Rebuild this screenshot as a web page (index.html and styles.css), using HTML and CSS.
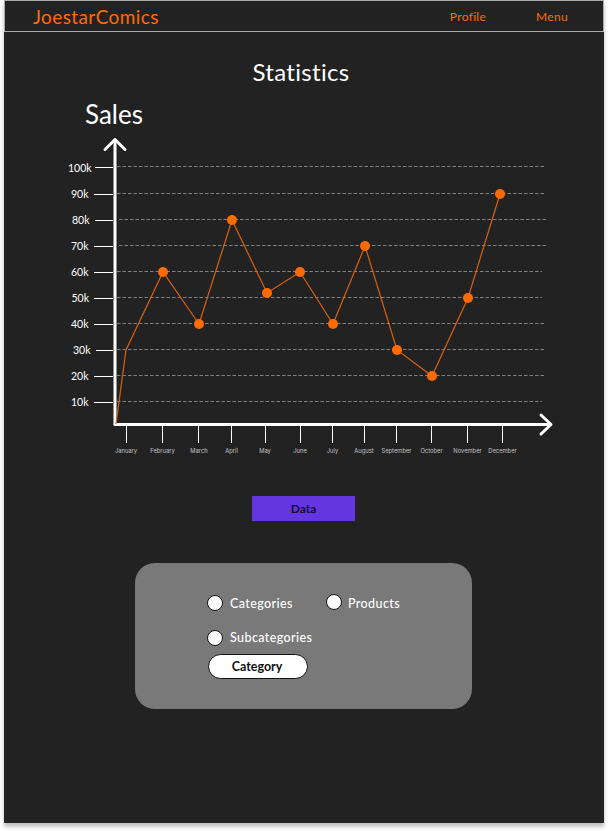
FILE: index.html
```html
<!DOCTYPE html>
<html lang="en">
<head>
    <meta charset="UTF-8">
    <meta name="viewport" content="width=device-width, initial-scale=1.0">
    <link rel="stylesheet" href="styles.css">
    <title>JoestarComics Statistics</title>
</head>
<body>
    <div class="page">
        <header class="topbar">
            <span class="brand">JoestarComics</span>
            <nav class="links">
                <a class="link-profile">Profile</a>
                <a class="link-menu">Menu</a>
            </nav>
        </header>

        <h1 class="title">Statistics</h1>

        <svg class="chart" width="600" height="400" viewBox="4 90 600 400">
            <text class="sales" x="85" y="124">Sales</text>

            <g class="grid">
                <line x1="117" y1="166.5" x2="544" y2="166.5"/>
                <line x1="117" y1="193.5" x2="544" y2="193.5"/>
                <line x1="119" y1="219.5" x2="546" y2="219.5"/>
                <line x1="119" y1="245.5" x2="546" y2="245.5"/>
                <line x1="117" y1="271.5" x2="542" y2="271.5"/>
                <line x1="117" y1="297.5" x2="542" y2="297.5"/>
                <line x1="117" y1="323.5" x2="544" y2="323.5"/>
                <line x1="117" y1="349.5" x2="544" y2="349.5"/>
                <line x1="117" y1="375.5" x2="544" y2="375.5"/>
                <line x1="117" y1="401.5" x2="542" y2="401.5"/>
            </g>

            <g class="ticks">
                <line x1="95" y1="167.5" x2="113" y2="167.5"/>
                <line x1="94" y1="194.5" x2="113" y2="194.5"/>
                <line x1="95" y1="220.5" x2="113" y2="220.5"/>
                <line x1="94" y1="246.5" x2="113" y2="246.5"/>
                <line x1="94" y1="272.5" x2="113" y2="272.5"/>
                <line x1="94" y1="298.5" x2="113" y2="298.5"/>
                <line x1="94" y1="324.5" x2="113" y2="324.5"/>
                <line x1="96" y1="350.5" x2="113" y2="350.5"/>
                <line x1="94" y1="376.5" x2="113" y2="376.5"/>
                <line x1="94" y1="402.5" x2="113" y2="402.5"/>
                <line x1="126.5" y1="425" x2="126.5" y2="443"/>
                <line x1="162.5" y1="425" x2="162.5" y2="443"/>
                <line x1="198.5" y1="425" x2="198.5" y2="443"/>
                <line x1="231.5" y1="425" x2="231.5" y2="443"/>
                <line x1="265.5" y1="425" x2="265.5" y2="443"/>
                <line x1="300.5" y1="425" x2="300.5" y2="443"/>
                <line x1="332.5" y1="425" x2="332.5" y2="443"/>
                <line x1="364.5" y1="425" x2="364.5" y2="443"/>
                <line x1="396.5" y1="425" x2="396.5" y2="443"/>
                <line x1="431.5" y1="425" x2="431.5" y2="443"/>
                <line x1="467.5" y1="425" x2="467.5" y2="443"/>
                <line x1="502.5" y1="425" x2="502.5" y2="443"/>
            </g>

            <g class="axis">
                <path d="M115 424V140"/>
                <path d="M105 149.5L115 139.5L125 149.5"/>
                <path d="M115 424.5H550"/>
                <path d="M541 415L551 424.5L541 434"/>
            </g>

            <g class="ylabels">
                <text x="68" y="172">100k</text>
                <text x="71" y="198">90k</text>
                <text x="72" y="224">80k</text>
                <text x="71" y="250">70k</text>
                <text x="71" y="276">60k</text>
                <text x="71.5" y="302">50k</text>
                <text x="71" y="328">40k</text>
                <text x="73" y="354">30k</text>
                <text x="71" y="380">20k</text>
                <text x="71" y="406">10k</text>
            </g>

            <g class="xlabels">
                <text x="126" y="453">January</text>
                <text x="162.5" y="453">February</text>
                <text x="199" y="453">March</text>
                <text x="231.5" y="453">April</text>
                <text x="265" y="453">May</text>
                <text x="300" y="453">June</text>
                <text x="332.5" y="453">July</text>
                <text x="364" y="453">August</text>
                <text x="396.5" y="453">September</text>
                <text x="431.5" y="453">October</text>
                <text x="467.5" y="453">November</text>
                <text x="502.5" y="453">December</text>
            </g>

            <polyline class="sales-line" points="116,424 126,350 163,272 199,324 232,220 267,293 300,272 333,324 365,246 397,350 432,376 468,298 500,194"/>
            <g class="dots">
                <circle cx="163" cy="272" r="5"/>
                <circle cx="199" cy="324" r="5"/>
                <circle cx="232" cy="220" r="5"/>
                <circle cx="267" cy="293" r="5"/>
                <circle cx="300" cy="272" r="5"/>
                <circle cx="333" cy="324" r="5"/>
                <circle cx="365" cy="246" r="5"/>
                <circle cx="397" cy="350" r="5"/>
                <circle cx="432" cy="376" r="5"/>
                <circle cx="468" cy="298" r="5"/>
                <circle cx="500" cy="194" r="5"/>
            </g>
        </svg>

        <div class="data-row">
            <button type="button" class="data-btn">Data</button>
        </div>

        <section class="panel">
            <div class="options">
                <div class="option-row">
                    <label class="option option-wide"><span class="radio"></span>Categories</label>
                    <label class="option option-up"><span class="radio"></span>Products</label>
                </div>
                <label class="option"><span class="radio"></span><span class="option-sub">Subcategories</span></label>
                <button type="button" class="category-btn">Category</button>
            </div>
        </section>
    </div>
</body>
</html>
```

FILE: styles.css
```css
* {
    box-sizing: border-box;
}

html, body {
    margin: 0;
    height: 100%;
    overflow: hidden;
}

body {
    background-color: #fff;
    font-family: "Lato", "Noto Sans", sans-serif;
    padding: 0 4px;
}

.page {
    width: 600px;
    height: 823px;
    background-color: #222;
    box-shadow: 0 4px 4px rgba(0, 0, 0, 0.25);
}

.topbar {
    height: 32px;
    border: 1px solid #aaa;
    display: flex;
    align-items: center;
    justify-content: space-between;
    padding-left: 28px;
}

.brand {
    color: #ff6b00;
    font-size: 19px;
    letter-spacing: 0.4px;
}

.links {
    display: flex;
    font-size: 12px;
    letter-spacing: 0.3px;
    color: #ff6b00;
}

.link-profile {
    margin-right: 50px;
}

.link-menu {
    margin-right: 35px;
}

.title {
    margin: 0;
    height: 58px;
    padding: 26px 6px 0 0;
    color: #fff;
    font-size: 24px;
    line-height: 28px;
    letter-spacing: 0.3px;
    font-weight: 400;
    text-align: center;
}

.chart {
    display: block;
}

.sales {
    fill: #fff;
    font-size: 26px;
}

.grid line {
    stroke: #808080;
    stroke-width: 1;
    stroke-dasharray: 3.5 2;
}

.ticks line {
    stroke: #fff;
    stroke-width: 1;
}

.axis path {
    fill: none;
    stroke: #fff;
    stroke-width: 3;
    stroke-linecap: round;
    stroke-linejoin: round;
}

.ylabels text {
    fill: #fff;
    font-size: 10.5px;
}

.xlabels text {
    fill: #c4c4c4;
    font-family: "Inter", sans-serif;
    font-size: 5.8px;
    text-anchor: middle;
}

.sales-line {
    fill: none;
    stroke: #d9620f;
    stroke-width: 1.2;
}

.dots circle {
    fill: #ff6b00;
}

.data-row {
    display: flex;
    justify-content: center;
    padding: 6px 1px 0 0;
}

.data-btn {
    width: 103px;
    height: 25px;
    border: 0;
    padding: 0;
    background-color: #6436e0;
    color: #14063a;
    font-family: inherit;
    font-size: 12px;
    font-weight: 700;
}

.panel {
    width: 337px;
    height: 146px;
    margin: 42px 0 0 131px;
    padding: 32px 0 0 72px;
    background-color: #797979;
    border-radius: 20px;
}

.options {
    display: flex;
    flex-direction: column;
    align-items: flex-start;
}

.option-row {
    display: flex;
    height: 35px;
}

.option {
    display: flex;
    align-items: center;
    height: 16px;
    color: #fff;
    font-size: 12.5px;
    font-weight: 500;
    letter-spacing: 0.4px;
}

.option-wide {
    width: 119px;
}

.option-sub {
    margin-top: -2px;
}

.radio {
    width: 16px;
    height: 16px;
    margin-right: 7px;
    background-color: #fff;
    border: 1px solid #111;
    border-radius: 50%;
}

.option-up .radio {
    margin: -2px 6px 0 0;
}

.category-btn {
    width: 100px;
    height: 25px;
    margin: 8px 0 0 1px;
    padding: 0 2px 0 0;
    background-color: #fff;
    border: 1px solid #111;
    border-radius: 13px;
    color: #111;
    font-family: inherit;
    font-size: 12.5px;
    font-weight: 700;
}
```
